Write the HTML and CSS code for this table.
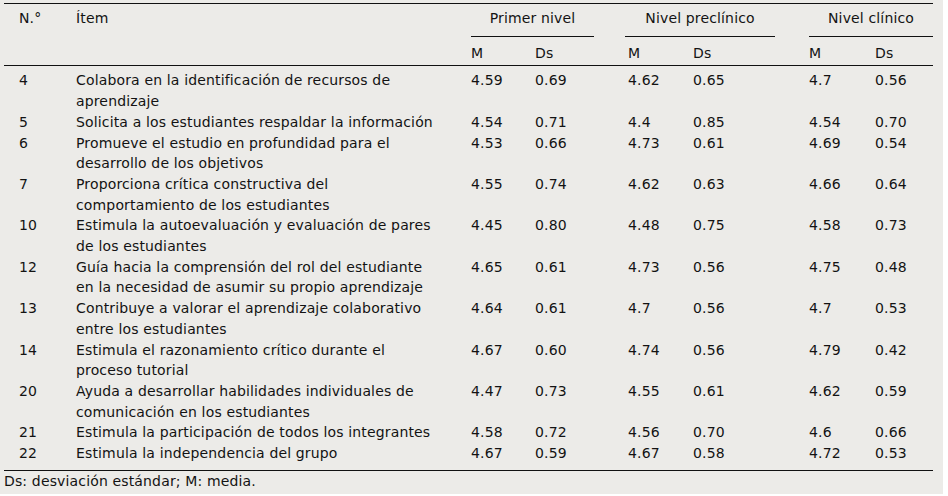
FILE: index.html
```html
<!DOCTYPE html>
<html lang="es">
<head>
<meta charset="utf-8">
<title>Tabla</title>
<link rel="stylesheet" href="styles.css">
</head>
<body>
<div class="panel">
  <table class="data">
    <colgroup>
      <col class="c-n"><col class="c-item"><col class="c-m1"><col class="c-d1"><col class="c-m2"><col class="c-d2"><col class="c-m3"><col class="c-d3">
    </colgroup>
    <thead>
      <tr class="h1">
        <th class="n" rowspan="2">N.°</th>
        <th class="item" rowspan="2">Ítem</th>
        <th colspan="2" class="grp g1"><div class="grp-line">Primer nivel</div></th>
        <th colspan="2" class="grp g2"><div class="grp-line">Nivel preclínico</div></th>
        <th colspan="2" class="grp g3"><div class="grp-line">Nivel clínico</div></th>
      </tr>
      <tr class="h2">
        <th>M</th><th>Ds</th><th class="m2">M</th><th>Ds</th><th>M</th><th>Ds</th>
      </tr>
    </thead>
    <tbody>
      <tr class="first"><td class="n">4</td><td class="item">Colabora en la identificación de recursos de aprendizaje</td><td>4.59</td><td>0.69</td><td class="m2">4.62</td><td>0.65</td><td>4.7</td><td>0.56</td></tr>
      <tr><td class="n">5</td><td class="item">Solicita a los estudiantes respaldar la información</td><td>4.54</td><td>0.71</td><td class="m2">4.4</td><td>0.85</td><td>4.54</td><td>0.70</td></tr>
      <tr><td class="n">6</td><td class="item">Promueve el estudio en profundidad para el desarrollo de los objetivos</td><td>4.53</td><td>0.66</td><td class="m2">4.73</td><td>0.61</td><td>4.69</td><td>0.54</td></tr>
      <tr><td class="n">7</td><td class="item">Proporciona crítica constructiva del comportamiento de los estudiantes</td><td>4.55</td><td>0.74</td><td class="m2">4.62</td><td>0.63</td><td>4.66</td><td>0.64</td></tr>
      <tr><td class="n">10</td><td class="item">Estimula la autoevaluación y evaluación de pares de los estudiantes</td><td>4.45</td><td>0.80</td><td class="m2">4.48</td><td>0.75</td><td>4.58</td><td>0.73</td></tr>
      <tr><td class="n">12</td><td class="item">Guía hacia la comprensión del rol del estudiante en la necesidad de asumir su propio aprendizaje</td><td>4.65</td><td>0.61</td><td class="m2">4.73</td><td>0.56</td><td>4.75</td><td>0.48</td></tr>
      <tr><td class="n">13</td><td class="item">Contribuye a valorar el aprendizaje colaborativo entre los estudiantes</td><td>4.64</td><td>0.61</td><td class="m2">4.7</td><td>0.56</td><td>4.7</td><td>0.53</td></tr>
      <tr><td class="n">14</td><td class="item">Estimula el razonamiento crítico durante el proceso tutorial</td><td>4.67</td><td>0.60</td><td class="m2">4.74</td><td>0.56</td><td>4.79</td><td>0.42</td></tr>
      <tr><td class="n">20</td><td class="item">Ayuda a desarrollar habilidades individuales de comunicación en los estudiantes</td><td>4.47</td><td>0.73</td><td class="m2">4.55</td><td>0.61</td><td>4.62</td><td>0.59</td></tr>
      <tr><td class="n">21</td><td class="item">Estimula la participación de todos los integrantes</td><td>4.58</td><td>0.72</td><td class="m2">4.56</td><td>0.70</td><td>4.6</td><td>0.66</td></tr>
      <tr class="last"><td class="n">22</td><td class="item">Estimula la independencia del grupo</td><td>4.67</td><td>0.59</td><td class="m2">4.67</td><td>0.58</td><td>4.72</td><td>0.53</td></tr>
    </tbody>
  </table>
  <p class="note">Ds: desviación estándar; M: media.</p>
</div>
</body>
</html>
```
FILE: styles.css
```css
html, body {
  margin: 0;
  padding: 0;
  background: #ffffff;
}
.panel {
  box-sizing: border-box;
  width: 943px;
  height: 494px;
  background: #ecebe8;
  padding: 3px 0 0 4px;
  font-family: "DejaVu Sans", sans-serif;
  font-size: 14px;
  letter-spacing: 0.15px;
  line-height: 20.7px;
  color: #131313;
}
.data {
  border-collapse: collapse;
  table-layout: fixed;
  width: 929px;
  border-top: 1px solid #111;
  border-bottom: 1px solid #111;
}
.c-n { width: 72px; }
.c-item { width: 395px; }
.c-m1 { width: 64px; }
.c-d1 { width: 90px; }
.c-m2 { width: 68px; }
.c-d2 { width: 116px; }
.c-m3 { width: 66px; }
.c-d3 { width: 58px; }
th, td {
  padding: 0;
  text-align: left;
  vertical-align: top;
  font-weight: normal;
}
.n { padding-left: 15px; }
td.item { padding-right: 34px; }
.m2 { padding-left: 3px; }
.h1 th { padding-top: 4px; }
.grp-line {
  text-align: center;
  border-bottom: 1px solid #111;
  padding-bottom: 7px;
}
.g1 { padding-right: 31px; }
.g2 { padding-right: 34px; }
.g3 { padding-right: 0; }
.h2 th { padding-top: 6px; padding-bottom: 2px; }
thead { border-bottom: 1px solid #111; }
.first td { padding-top: 4px; }
.last td { padding-bottom: 6px; }
.note {
  margin: 0;
}
```
